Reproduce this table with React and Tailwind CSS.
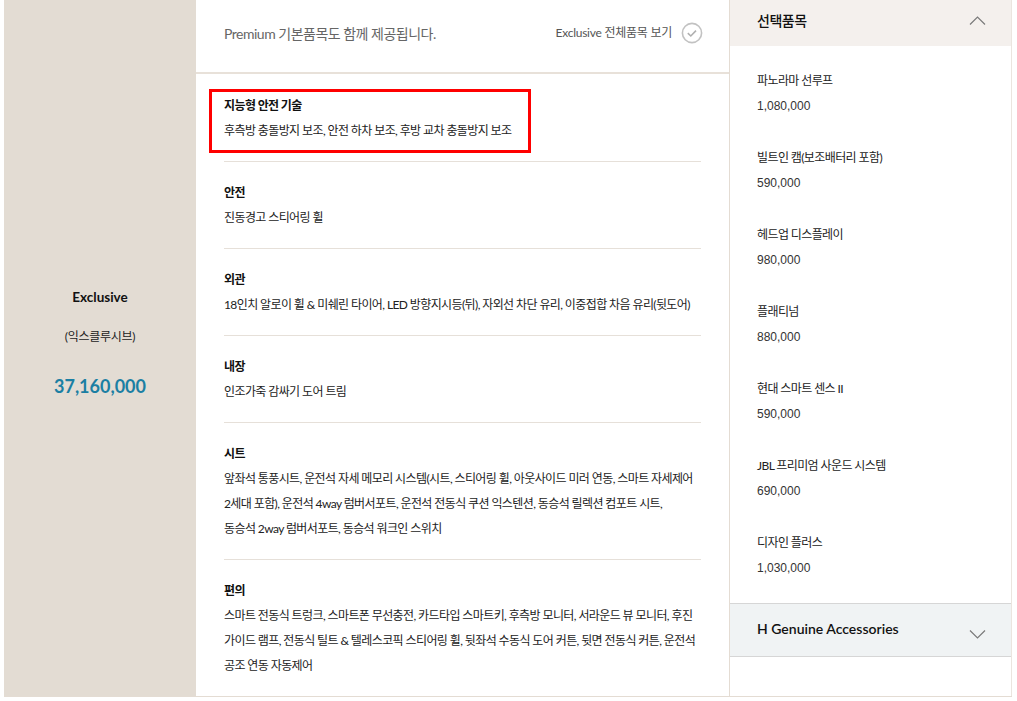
import React from "react";

const FONT = { fontFamily: 'Lato, "Noto Sans CJK KR", sans-serif' };

const sections = [
  { title: "지능형 안전 기술", lines: ["후측방 충돌방지 보조, 안전 하차 보조, 후방 교차 충돌방지 보조"], highlight: true },
  { title: "안전", lines: ["진동경고 스티어링 휠"] },
  { title: "외관", lines: ["18인치 알로이 휠 & 미쉐린 타이어, LED 방향지시등(뒤), 자외선 차단 유리, 이중접합 차음 유리(뒷도어)"] },
  { title: "내장", lines: ["인조가죽 감싸기 도어 트림"] },
  {
    title: "시트",
    lines: [
      "앞좌석 통풍시트, 운전석 자세 메모리 시스템(시트, 스티어링 휠, 아웃사이드 미러 연동, 스마트 자세제어",
      "2세대 포함), 운전석 4way 럼버서포트, 운전석 전동식 쿠션 익스텐션, 동승석 릴렉션 컴포트 시트,",
      "동승석 2way 럼버서포트, 동승석 워크인 스위치",
    ],
  },
  {
    title: "편의",
    lines: [
      "스마트 전동식 트렁크, 스마트폰 무선충전, 카드타입 스마트키, 후측방 모니터, 서라운드 뷰 모니터, 후진",
      "가이드 램프, 전동식 틸트 & 텔레스코픽 스티어링 휠, 뒷좌석 수동식 도어 커튼, 뒷면 전동식 커튼, 운전석",
      "공조 연동 자동제어",
    ],
  },
];

const options = [
  { name: "파노라마 선루프", price: "1,080,000" },
  { name: "빌트인 캠(보조배터리 포함)", price: "590,000" },
  { name: "헤드업 디스플레이", price: "980,000" },
  { name: "플래티넘", price: "880,000" },
  { name: "현대 스마트 센스 II", price: "590,000" },
  { name: "JBL 프리미엄 사운드 시스템", price: "690,000" },
  { name: "디자인 플러스", price: "1,030,000" },
];

function Chevron({ up }) {
  return (
    <svg width="17" height="9" viewBox="0 0 17 9" fill="none">
      <polyline
        points={up ? "1,8.5 8.5,1 16,8.5" : "1,0.5 8.5,8 16,0.5"}
        stroke="#7a7a7a"
        strokeWidth="1.2"
      />
    </svg>
  );
}

function CheckCircle() {
  return (
    <svg width="22" height="22" viewBox="0 0 22 22" fill="none">
      <circle cx="11" cy="11" r="9.6" stroke="#c2c2c2" strokeWidth="1.6" />
      <path d="M6.8 11.2 L9.8 14 L15 8.6" stroke="#b0b0b0" strokeWidth="1.6" />
    </svg>
  );
}

export default function App() {
  return (
    <div className="bg-white w-[1017px] h-[701px] pl-[4px]" style={FONT}>
      <div className="flex w-[1008px] border-b border-[#e4dcd3]">
        {/* trim summary */}
        <div className="w-[192px] shrink-0 bg-[#e3dcd3] flex flex-col items-center justify-center pb-[11px] text-[#111]">
          <div className="text-[13.5px] font-bold leading-[20px]">Exclusive</div>
          <div className="mt-[20px] text-[12px] leading-[20px] tracking-[-0.25px] text-[#222]">(익스클루시브)</div>
          <div className="mt-[27px] text-[18px] font-bold leading-[24px] text-[#1b7fa3]">37,160,000</div>
        </div>

        {/* basic items */}
        <div className="w-[534px] shrink-0 border-r border-[#e4dcd3]">
          <div className="h-[74px] border-b-2 border-[#e8e1d9] flex items-center justify-between pl-[28px] pr-[26px] pb-[6px]">
            <span className="text-[14px] tracking-[-0.5px] text-[#666]">Premium 기본품목도 함께 제공됩니다.</span>
            <div className="flex items-center gap-[9px]">
              <span className="text-[12px] tracking-[-0.25px] text-[#555]">Exclusive 전체품목 보기</span>
              <CheckCircle />
            </div>
          </div>
          <div className="px-[28px]">
            {sections.map((s, i) => (
              <div
                key={s.title}
                className={`relative pb-[18px] ${i === 0 ? "pt-[24px]" : "pt-[23px]"} ${i < sections.length - 1 ? "border-b border-[#e6e0d9]" : ""}`}
              >
                {s.highlight && (
                  <div className="absolute left-[-15px] top-[15px] w-[322px] h-[64px] border-[3px] border-[#ff0000]" />
                )}
                <div className="text-[12px] font-bold leading-[16px] tracking-[-0.6px] text-[#111]">{s.title}</div>
                <div className="mt-[4px] text-[12px] leading-[25px] tracking-[-0.6px] text-[#222] whitespace-nowrap">
                  {s.lines.map((l, j) => (
                    <div key={j}>{l}</div>
                  ))}
                </div>
              </div>
            ))}
          </div>
        </div>

        {/* options */}
        <div className="w-[282px] shrink-0 border-r border-[#ebe5df] flex flex-col">
          <div className="h-[46px] bg-[#f4f0ed] flex items-center justify-between pl-[27px] pr-[25px] pb-[6px]">
            <span className="text-[14px] font-medium tracking-[-0.5px] text-[#111]">선택품목</span>
            <Chevron up />
          </div>
          <div className="flex flex-col gap-[32px] pt-[25px] pb-[25px] pl-[27px]">
            {options.map((o) => (
              <div key={o.name}>
                <div className="text-[12px] leading-[20px] tracking-[-0.6px] text-[#222]">{o.name}</div>
                <div className="mt-[5px] text-[12px] leading-[20px] text-[#333]" style={{ fontFamily: '"Liberation Sans", sans-serif' }}>
                  {o.price}
                </div>
              </div>
            ))}
          </div>
          <div className="h-[54px] bg-[#f0f3f4] border-y border-[#d6d6d6] flex items-center justify-between pl-[27px] pr-[25px]">
            <span className="text-[14px] font-semibold text-[#111] -mt-[3px]">H Genuine Accessories</span>
            <span className="mt-[9px]">
              <Chevron />
            </span>
          </div>
        </div>
      </div>
    </div>
  );
}
